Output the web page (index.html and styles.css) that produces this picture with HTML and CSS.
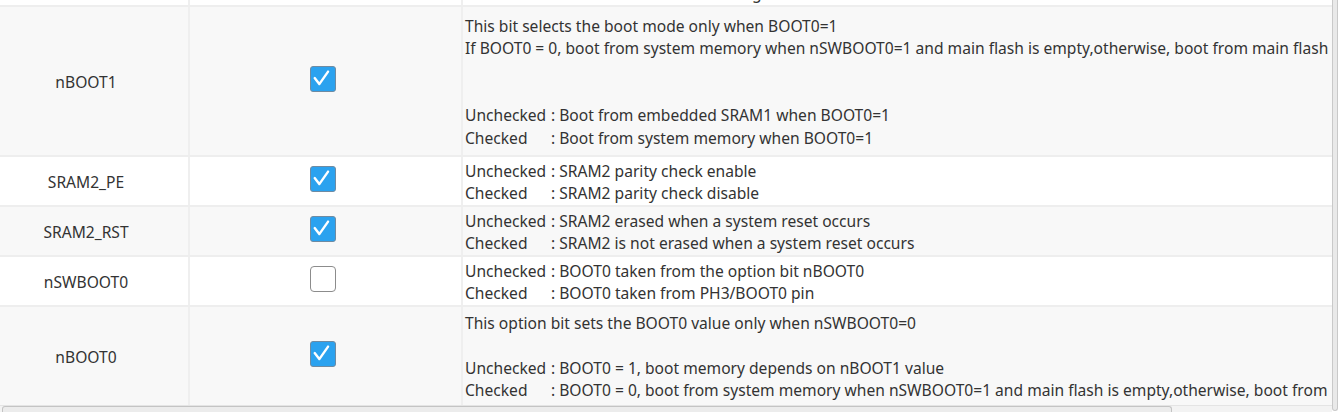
FILE: index.html
```html
<!DOCTYPE html>
<html lang="en">
<head>
<meta charset="utf-8">
<title>Option bytes</title>
<link rel="stylesheet" href="styles.css">
</head>
<body>
<div class="frame">
  <div class="main">
    <div class="viewport">
      <div class="rows">
        <div class="row">
          <div class="name">WWDG_SW</div>
          <div class="check"><span class="box checked"><svg viewBox="0 0 26 26"><path d="M5.5 13.5 L10.5 20 L20 6.5"/></svg></span></div>
          <div class="desc">
            <div class="ln"><span class="lbl">Unchecked</span>: Hardware window watchdog</div>
            <div class="ln"><span class="lbl">Checked</span>: Software window watchdog</div>
          </div>
        </div>
        <div class="row alt tall">
          <div class="name">nBOOT1</div>
          <div class="check"><span class="box checked"><svg viewBox="0 0 26 26"><path d="M5.5 13.5 L10.5 20 L20 6.5"/></svg></span></div>
          <div class="desc">
            <div class="ln">This bit selects the boot mode only when BOOT0=1</div>
            <div class="ln">If BOOT0 = 0, boot from system memory when nSWBOOT0=1 and main flash is empty,otherwise, boot from main flash</div>
            <div class="ln"></div>
            <div class="ln"></div>
            <div class="ln"><span class="lbl">Unchecked</span>: Boot from embedded SRAM1 when BOOT0=1</div>
            <div class="ln"><span class="lbl">Checked</span>: Boot from system memory when BOOT0=1</div>
          </div>
        </div>
        <div class="row">
          <div class="name">SRAM2_PE</div>
          <div class="check"><span class="box checked"><svg viewBox="0 0 26 26"><path d="M5.5 13.5 L10.5 20 L20 6.5"/></svg></span></div>
          <div class="desc">
            <div class="ln"><span class="lbl">Unchecked</span>: SRAM2 parity check enable</div>
            <div class="ln"><span class="lbl">Checked</span>: SRAM2 parity check disable</div>
          </div>
        </div>
        <div class="row alt">
          <div class="name">SRAM2_RST</div>
          <div class="check"><span class="box checked"><svg viewBox="0 0 26 26"><path d="M5.5 13.5 L10.5 20 L20 6.5"/></svg></span></div>
          <div class="desc">
            <div class="ln"><span class="lbl">Unchecked</span>: SRAM2 erased when a system reset occurs</div>
            <div class="ln"><span class="lbl">Checked</span>: SRAM2 is not erased when a system reset occurs</div>
          </div>
        </div>
        <div class="row">
          <div class="name">nSWBOOT0</div>
          <div class="check"><span class="box"></span></div>
          <div class="desc">
            <div class="ln"><span class="lbl">Unchecked</span>: BOOT0 taken from the option bit nBOOT0</div>
            <div class="ln"><span class="lbl">Checked</span>: BOOT0 taken from PH3/BOOT0 pin</div>
          </div>
        </div>
        <div class="row alt medium">
          <div class="name">nBOOT0</div>
          <div class="check"><span class="box checked"><svg viewBox="0 0 26 26"><path d="M5.5 13.5 L10.5 20 L20 6.5"/></svg></span></div>
          <div class="desc">
            <div class="ln">This option bit sets the BOOT0 value only when nSWBOOT0=0</div>
            <div class="ln"></div>
            <div class="ln"><span class="lbl">Unchecked</span>: BOOT0 = 1, boot memory depends on nBOOT1 value</div>
            <div class="ln"><span class="lbl">Checked</span>: BOOT0 = 0, boot from system memory when nSWBOOT0=1 and main flash is empty,otherwise, boot from main flash</div>
          </div>
        </div>
      </div>
    </div>
    <div class="hbar"><div class="hthumb"></div></div>
  </div>
  <div class="vbar"><div class="vthumb"></div></div>
</div>
</body>
</html>
```
FILE: styles.css
```css
* { box-sizing: border-box; }
html, body { margin: 0; padding: 0; background: #ffffff; }
body {
  font-family: "Noto Sans", "Open Sans", "Liberation Sans", sans-serif;
  font-size: 15.6px;
  color: #333333;
  overflow: hidden;
}
.frame { display: flex; width: 1341px; height: 412px; }
.main { width: 1332px; display: flex; flex-direction: column; }
.viewport { height: 405px; overflow: hidden; }
.rows { margin-top: -43px; }
.row {
  display: grid;
  grid-template-columns: 190px 273px 1fr;
  height: 50px;
  border-bottom: 2px solid #eeeeee;
  background: #ffffff;
}
.row.alt { background: #f8f8f8; }
.row.tall { height: 150px; }
.row.medium { height: 100px; }
.name {
  border-right: 2px solid #efefef;
  display: flex;
  align-items: center;
  justify-content: center;
  padding: 2px 16px 0 0;
}
.check {
  border-right: 2px solid #efefef;
  display: flex;
  align-items: center;
  justify-content: center;
  padding: 0 5px 5px 0;
}
.box {
  width: 26px;
  height: 26px;
  border: 1.5px solid #8c8c8c;
  border-radius: 4px;
  background: #ffffff;
  display: block;
}
.box.checked {
  background: #2ba2ef;
  border-color: #6f8ba2;
  border-radius: 3px;
}
.box svg { display: block; width: 100%; height: 100%; }
.box svg path {
  fill: none;
  stroke: #ffffff;
  stroke-width: 2.6;
  stroke-linecap: round;
  stroke-linejoin: round;
  transform: translate(-1.5px, -1.5px);
}
.desc {
  display: flex;
  flex-direction: column;
  justify-content: center;
  padding: 2px 0 0 2px;
  line-height: 22.4px;
  white-space: nowrap;
  overflow: hidden;
}
.ln { height: 22.4px; }
.lbl { display: inline-block; width: 86px; }
.hbar {
  height: 7px;
  border-top: 1px solid #e4e4e4;
  background: #f3f3f3;
  padding-left: 2px;
}
.hthumb {
  width: 1170px;
  height: 6px;
  border: 1px solid #c4c4c4;
  border-bottom: none;
  border-radius: 3px 3px 0 0;
  background: #ececec;
}
.vbar { width: 9px; background: #ffffff; }
.vthumb {
  width: 6px;
  height: 411px;
  border: 1px solid #c9c9c9;
  border-top: none;
  border-radius: 0 0 3px 3px;
  background: #e9e9e9;
}
```
